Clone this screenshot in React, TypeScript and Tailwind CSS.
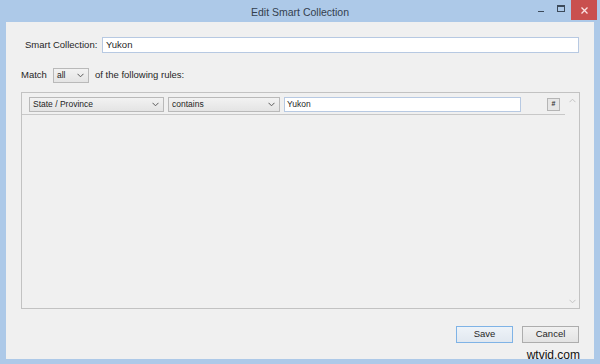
import React from 'react';

const ui = { fontFamily: '"Liberation Sans", Arial, sans-serif' };

function Chevron() {
  return (
    <svg width="7" height="5" viewBox="0 0 7 5" className="shrink-0">
      <path d="M0.5 0.8 L3.5 3.8 L6.5 0.8" fill="none" stroke="#5a5a5a" strokeWidth="1" />
    </svg>
  );
}

function Select({ value, width }: { value: string; width: string }) {
  return (
    <div
      className={`${width} h-[15px] flex items-center justify-between pl-[3px] pr-[4px] border border-[#b9b9b9] bg-gradient-to-b from-[#f2f2f2] to-[#e4e4e4] text-[8.5px] text-[#1e1e1e]`}
    >
      <span>{value}</span>
      <Chevron />
    </div>
  );
}

export default function App() {
  return (
    <div className="w-[600px] h-[364px] bg-[#adc9e8] flex flex-col overflow-hidden relative" style={ui}>
      {/* title bar */}
      <div className="h-[22px] grid grid-cols-[1fr_auto_1fr] items-start">
        <div />
        <div className="pt-[5px] text-[10.5px] text-[#33404e]">Edit Smart Collection</div>
        <div className="flex justify-end items-start">
          <div className="w-[20px] h-[20px] flex items-center justify-center">
            <div className="w-[6px] h-[1px] bg-[#3c4a5a] mt-[3px]" />
          </div>
          <div className="w-[20px] h-[20px] flex items-center justify-center">
            <div className="w-[8px] h-[7px] border border-[#3c4a5a] border-t-2 -mt-[3px]" />
          </div>
          <div className="w-[26px] h-[20px] mr-[3px] bg-[#c9504e] flex items-center justify-center">
            <svg width="7" height="7" viewBox="0 0 7 7">
              <path d="M0.5 0.5 L6.5 6.5 M6.5 0.5 L0.5 6.5" stroke="#fbe3e3" strokeWidth="1.3" />
            </svg>
          </div>
        </div>
      </div>

      {/* client area */}
      <div className="flex-1 mx-[6px] mb-[5px] bg-[#f0f0f0] flex flex-col pt-[15px] pb-[16px] pl-[15px] pr-[14px] text-[9.5px] text-[#262626]">
        <div className="h-[16px] flex items-center pl-[4px] pr-[1px]">
          <span className="w-[77px]">Smart Collection:</span>
          <div className="flex-1 h-[16px] bg-white border border-[#b7c9e2] flex items-center pl-[3px]">Yukon</div>
        </div>

        <div className="mt-[14px] h-[16px] flex items-center">
          <span className="w-[32px]">Match</span>
          <Select value="all" width="w-[36px]" />
          <span className="ml-[6px]">of the following rules:</span>
        </div>

        <div className="mt-[9px] flex-1 border border-[#c2c2c2] flex">
          <div className="flex-1 flex flex-col">
            <div className="h-[22px] border-b border-[#c8c8c8] flex items-start pt-[4px] pl-[7px]">
              <Select value="State / Province" width="w-[135px]" />
              <div className="w-[4px]" />
              <Select value="contains" width="w-[112px]" />
              <div className="w-[4px]" />
              <div className="w-[237px] h-[15px] bg-white border border-[#b7c9e2] flex items-center pl-[2px] text-[8.5px]">
                Yukon
              </div>
              <div className="ml-[26px] mt-[1px] w-[13px] h-[13px] border border-[#b5b5b5] bg-[#e6e6e6] flex items-center justify-center text-[7px] font-bold text-[#333]">
                #
              </div>
            </div>
          </div>
          <div className="w-[14px] flex flex-col items-center justify-between pt-[5px] pb-[4px]">
            <svg width="7" height="5" viewBox="0 0 7 5">
              <path d="M0.5 4.2 L3.5 1.2 L6.5 4.2" fill="none" stroke="#c4c4c4" strokeWidth="1" />
            </svg>
            <svg width="7" height="5" viewBox="0 0 7 5">
              <path d="M0.5 0.8 L3.5 3.8 L6.5 0.8" fill="none" stroke="#c4c4c4" strokeWidth="1" />
            </svg>
          </div>
        </div>

        <div className="mt-[17px] flex justify-end gap-[9px] pr-[1px]">
          <div className="w-[57px] h-[17px] border border-[#7fb3e6] bg-gradient-to-b from-[#eef3f8] to-[#e1e8f0] flex items-center justify-center">
            Save
          </div>
          <div className="w-[57px] h-[17px] border border-[#adadad] bg-gradient-to-b from-[#f1f1f1] to-[#e3e3e3] flex items-center justify-center">
            Cancel
          </div>
        </div>
      </div>

      <div className="absolute right-[20px] bottom-[3px] text-[12px] leading-[12px] text-[#111]">wtvid.com</div>
    </div>
  );
}
